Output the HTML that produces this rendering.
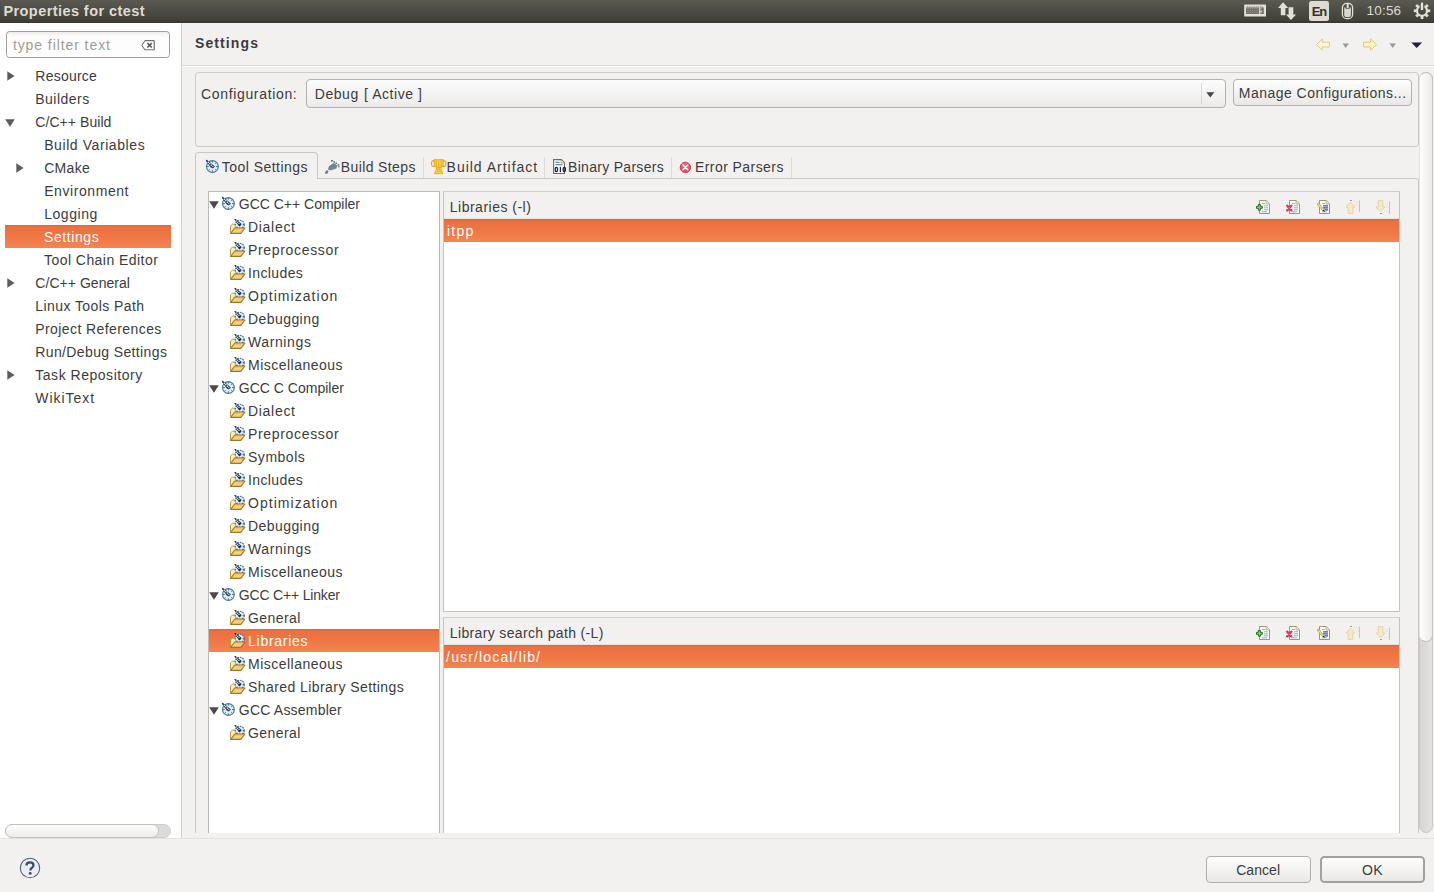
<!DOCTYPE html>
<html><head><meta charset='utf-8'><title>Properties for ctest</title><style>
*{box-sizing:border-box;margin:0;padding:0}
html,body{width:1434px;height:892px;overflow:hidden;background:#f2f1f0;font-family:"Liberation Sans",sans-serif}
#r{position:relative;width:1434px;height:892px;overflow:hidden;background:#f2f1f0}
#r div,.t,.i{position:absolute}
.t{white-space:pre;line-height:20px;height:20px}
.i{overflow:visible}
.sel{background:linear-gradient(#e1672f 0,#ec7040 9%,#ef7846 55%,#f38552 100%)}
</style></head><body><div id=r>
<svg width="0" height="0" style="position:absolute">
<defs>
<!-- tool settings gear/clock icon : 16x16 box, ring occupies ~1..14 -->
<symbol id="tool" viewBox="0 0 16 16">
  <circle cx="7.4" cy="7.5" r="5.9" fill="#e0edf8" stroke="#487b9a" stroke-width="1.2"/>
  <g stroke="#4c7d9b" stroke-width="1">
    <path d="M7.4 1.7v2M7.4 11.3v2.2M1.6 7.5h2.2M11 7.5h2.2M3.3 11.6l1.3-1.3M11.5 11.6l-1.3-1.3M11.5 3.4l-1.3 1.3"/>
  </g>
  <path d="M0.8 1 L1.8 0.7 L10 7.4 L7.8 9.6 L5.8 8.4 L1.2 2.2Z" fill="#27405a"/>
  <path d="M2.8 2.9 L8.2 7.7" stroke="#fff" stroke-width="1.2" stroke-dasharray="1.3 .8"/>
</symbol>
<!-- folder with tool overlay : 17x17 -->
<symbol id="fold" viewBox="0 0 17 17">
  <path d="M1.5 13.5 V7 L3.4 5.2 H6.6 L7.6 6.4 H12 V9" fill="#fbefb9" stroke="#b99a3f" stroke-width="1"/>
  <g transform="translate(5,0) scale(0.76)">
    <circle cx="7.6" cy="7.6" r="5.9" fill="#e4effa" stroke="#3d6fa8" stroke-width="1.5" stroke-dasharray="2.2 1.2"/>
    <path d="M3.4 11.8l1.3-1.3M11.8 11.8l-1.3-1.3M7.6 11.3v2.2M11.3 7.6h2.2" stroke="#34589a" stroke-width="1.4"/>
    <path d="M0.2 0 L1.8 -0.2 L10 6.6 L7.8 9.8 L6 8.8 Z" fill="#1d2f3b"/>
    <path d="M2.6 2.2 L7.8 7.2" stroke="#fff" stroke-width="1.7" stroke-dasharray="1.3 1.1"/>
  </g>
  <path d="M1.6 14.4 L5.8 9 H16 L11.8 14.4 Z" fill="#f8cf7a" stroke="#9d7a26" stroke-width="1.1" stroke-linejoin="round"/>
  <path d="M6.2 9.9 H14.6" stroke="#d9a060" stroke-width="0.8" opacity=".7"/>
</symbol>
<!-- build steps (spray) -->
<symbol id="steps" viewBox="0 0 16 16">
  <path d="M1 14.2 Q1 12.6 3 11 L4.6 12.4 Q3.6 15 1.8 15 Q1 15 1 14.2Z" fill="#6c7b88"/>
  <path d="M4 10.4 L5 7.2 L9.6 4 L13.2 6.6 L12.4 9.4 L7.2 11.2 L5.2 11.2Z" fill="#728595"/>
  <path d="M9.8 4.4 L13 6.8 L12.4 9 L10.6 9.2Z" fill="#6a8a82" opacity=".8"/>
  <g fill="#5b6873"><rect x="7" y="1" width="1.8" height="1.5"/><rect x="9.4" y="2.2" width="1.6" height="1.4"/><rect x="11.4" y="3.6" width="1.6" height="1.4"/><rect x="13.6" y="5.2" width="1.6" height="1.4"/><rect x="14.2" y="6.8" width="1.4" height="1.6" fill="#6b6f86"/></g>
</symbol>
<!-- trophy -->
<symbol id="trophy" viewBox="0 0 16 16">
  <ellipse cx="2.6" cy="4.6" rx="2.2" ry="3" fill="none" stroke="#dba53a" stroke-width="1.1"/>
  <ellipse cx="12.8" cy="4.6" rx="2.2" ry="3" fill="none" stroke="#dba53a" stroke-width="1.1"/>
  <path d="M3 0.7 H12.4 V5 Q12.4 8.7 7.7 8.9 Q3 8.7 3 5Z" fill="#fbc93c" stroke="#e9a11d" stroke-width=".9"/>
  <path d="M5.4 1.6V7.6M7.7 1.6V8M10 1.6V7.6" stroke="#f3a81c" stroke-width="1"/>
  <path d="M6.5 1.6V7.6M8.8 1.6V7.8" stroke="#fdeb78" stroke-width=".9"/>
  <path d="M5.8 9 H9.6 L11.8 14.7 H3.4Z" fill="#fbd648" stroke="#e9a524" stroke-width=".9" stroke-linejoin="round"/>
  <path d="M6 10.6H9.4M5.4 12.3H10" stroke="#eda826" stroke-width=".9"/>
</symbol>
<!-- binary file -->
<symbol id="bin" viewBox="0 0 16 16">
  <path d="M1.6 0.6 H9.4 L12.5 3.8 V14.5 H1.6Z" fill="#fafbfd" stroke="#6f6b5c" stroke-width="1.1"/>
  <path d="M9.2 0.8 V4 H12.4" fill="#f3e8b8" stroke="#a39a70" stroke-width=".8"/>
  <path d="M3.4 3.4H7.6M3.4 5.6H10.4" stroke="#7089b3" stroke-width="1.1"/>
  <g fill="none" stroke="#16233f" stroke-width="1.25"><rect x="3.3" y="8.4" width="2.2" height="4.2" rx="1.1"/><path d="M8.4 7.9V13.1"/><rect x="11.2" y="8.4" width="2.2" height="4.2" rx="1.1"/></g>
</symbol>
<!-- error -->
<symbol id="err" viewBox="0 0 16 16">
  <circle cx="6.4" cy="7.4" r="5.2" fill="#e84b5b" stroke="#c63244" stroke-width=".9"/>
  <circle cx="6.4" cy="6.4" r="3.8" fill="#f27f88" opacity=".45"/>
  <path d="M4 5 L8.8 9.8 M8.8 5 L4 9.8" stroke="#fff" stroke-width="1.5" stroke-linecap="round"/>
</symbol>
<!-- document base -->
<symbol id="doc" viewBox="0 0 16 16">
  <path d="M4.5 1.5 H11.2 L14.5 4.8 V14.5 H4.5Z" fill="#fcfcfa" stroke="#94896c" stroke-width=".9"/>
  <path d="M11 1.6 V5 H14.4" fill="#f1e6b8" stroke="#aea076" stroke-width=".7"/>
  <path d="M7 4.6H10M9 6.8H13M9 8.8H13M9 10.8H13M7 12.8H12" stroke="#8aa2cf" stroke-width=".9"/>
</symbol>
<symbol id="add" viewBox="0 0 16 16">
  <use href="#doc"/>
  <path d="M3.4 5.4 H5.4 V7.3 H7.3 V9.3 H5.4 V11.2 H3.4 V9.3 H1.5 V7.3 H3.4Z" fill="#86cf60" stroke="#1f6d22" stroke-width=".95" stroke-linejoin="round"/>
</symbol>
<symbol id="del" viewBox="0 0 16 16">
  <use href="#doc"/>
  <path d="M2.2 6.8 L6.4 11.4 M6.4 6.8 L2.2 11.4" stroke="#d62c3f" stroke-width="2.3" stroke-linecap="round"/>
  <path d="M2.6 7.2 L6 11 M6 7.2 L2.6 11" stroke="#f0606c" stroke-width=".9" stroke-linecap="round"/>
</symbol>
<symbol id="edit" viewBox="0 0 16 16">
  <use href="#doc"/>
  <path d="M8 6.8H13M8 8.8H13M10 10.8H13" stroke="#4a67b2" stroke-width="1.2"/>
  <path d="M2 5 L3.5 3.9 L9.1 10.5 L7.6 11.7Z" fill="#f4e284" stroke="#b09c4c" stroke-width=".8"/>
  <path d="M7.6 11.7 L9.1 10.5 L9.9 13Z" fill="#1b1b2b"/>
</symbol>
<symbol id="up" viewBox="0 0 16 16">
  <g opacity=".62">
  <path d="M5.5 3.2 L10 8 H7.8 V14.4 H3.2 V8 H1 Z" fill="#fae7a8" stroke="#dcc27c" stroke-width="1" stroke-linejoin="round"/>
  <path d="M14.5 1.5V13" stroke="#a9a9b3" stroke-width="1"/>
  <path d="M5 1.5h2" stroke="#666" stroke-width="1"/>
  <path d="M9 2.5h5M10 4.5h4M11 6.5h3M11 10.5h3" stroke="#d5d5e2" stroke-width="1" stroke-dasharray="1 1"/>
  </g>
</symbol>
<symbol id="down" viewBox="0 0 16 16">
  <g opacity=".62">
  <path d="M5.5 12.8 L10 8 H7.8 V1.6 H3.2 V8 H1 Z" fill="#fae7a8" stroke="#dcc27c" stroke-width="1" stroke-linejoin="round"/>
  <path d="M14.5 2.5V15" stroke="#a9a9b3" stroke-width="1"/>
  <path d="M5 14.5h2" stroke="#666" stroke-width="1"/>
  <path d="M10 4.5h4M10 6.5h4M11 8.5h3M9 12.5h5" stroke="#d5d5e2" stroke-width="1" stroke-dasharray="1 1"/>
  </g>
</symbol>
<!-- nav arrows (faded yellow) -->
<symbol id="back" viewBox="0 0 16 16">
  <path d="M1.4 7.6 L7.4 2 V5.2 H14.4 V10 H7.4 V13.2Z" fill="#fdf5d3" stroke="#dccb96" stroke-width="1" stroke-linejoin="round"/>
</symbol>
<symbol id="fwd" viewBox="0 0 16 16">
  <path d="M14.6 7.6 L8.6 2 V5.2 H1.6 V10 H8.6 V13.2Z" fill="#fdf2c2" stroke="#d9c68a" stroke-width="1" stroke-linejoin="round"/>
</symbol>
<!-- indicators -->
<symbol id="kbd" viewBox="0 0 23 14">
  <rect x=".2" y=".6" width="21.8" height="12" rx=".6" fill="#e4e1d9"/>
  <rect x="2" y="3.4" width="17.8" height="6.6" fill="#6f6d67"/>
  <path d="M2.6 4.6h16.6M2.6 6.6h16.6M2.6 8.6h16.6" stroke="#a9a69f" stroke-width=".9" stroke-dasharray=".9 .9"/>
  <path d="M3 2.4h16" stroke="#8d8b85" stroke-width=".8" stroke-dasharray="1.2 1"/>
  <rect x="15.2" y="3.4" width="1.2" height="6.6" fill="#e4e1d9"/>
  <rect x="16.4" y="7" width="1.4" height="1.2" fill="#e4e1d9"/>
</symbol>
<symbol id="net" viewBox="0 0 19 19">
  <path d="M5.1 0.3 L10.2 5.9 H7.4 V13.3 H2.8 V5.9 H0Z" fill="#e2dfd7"/>
  <path d="M13 18 L7.9 12.6 H10.6 V5.3 H15.3 V12.6 H18.1Z" fill="#e2dfd7"/>
</symbol>
<symbol id="bat" viewBox="0 0 15 18">
  <rect x="2.4" y="1.4" width="10.2" height="15.2" rx="4.2" fill="none" stroke="#e2dfd7" stroke-width="1.3"/>
  <path d="M4.2 5.6 H10.9 V13 Q10.9 15.2 7.5 15.2 Q4.2 15.2 4.2 13Z" fill="#dad7cf"/>
  <rect x="5.6" y="4.4" width="4" height="2.4" fill="#4a4944"/>
  <rect x="6.7" y="1.6" width="2" height="4.6" fill="#e2dfd7"/>
</symbol>
<symbol id="gear" viewBox="0 0 19 19">
  <g transform="translate(9,8.8)">
  <circle r="5" fill="none" stroke="#e2dfd7" stroke-width="2.2"/>
  <g fill="#e2dfd7">
    <rect x="-1.4" y="-8.2" width="2.8" height="3" transform="rotate(45)"/>
    <rect x="-1.4" y="-8.2" width="2.8" height="3" transform="rotate(90)"/>
    <rect x="-1.4" y="-8.2" width="2.8" height="3" transform="rotate(135)"/>
    <rect x="-1.4" y="-8.2" width="2.8" height="3" transform="rotate(180)"/>
    <rect x="-1.4" y="-8.2" width="2.8" height="3" transform="rotate(225)"/>
    <rect x="-1.4" y="-8.2" width="2.8" height="3" transform="rotate(270)"/>
    <rect x="-1.4" y="-8.2" width="2.8" height="3" transform="rotate(315)"/>
  </g>
  <rect x="-2.4" y="-8.6" width="4.8" height="5.6" fill="#4c4b46"/>
  <rect x="-1.2" y="-8.2" width="2.4" height="7.4" rx=".5" fill="#e6e3db"/>
  </g>
</symbol>
<symbol id="help" viewBox="0 0 22 22">
  <circle cx="11" cy="11" r="9.7" fill="#eaedf4" stroke="#585d6d" stroke-width="1.05"/>
  <path d="M7.4 8.6 Q7.4 5.3 11 5.3 Q14.5 5.3 14.5 8.2 Q14.5 9.8 12.7 10.9 Q11.3 11.8 11.3 13.4" fill="none" stroke="#414b5e" stroke-width="2.3"/>
  <circle cx="11.2" cy="16.4" r="1.45" fill="#414b5e"/>
</symbol>
<symbol id="clear" viewBox="0 0 17 13">
  <path d="M4.6 0.8 H16 V12.2 H4.6 L0.8 6.5Z" fill="none" stroke="#4b4a47" stroke-width="1.15" stroke-linejoin="miter"/>
  <path d="M7.6 3.8 L13 9.2 M13 3.8 L7.6 9.2" stroke="#5a5957" stroke-width="1.9"/>
</symbol>
</defs>
</svg>


<div style="left:0;top:0;width:1434px;height:23px;background:linear-gradient(#5b5a51 0%,#4f4e49 35%,#464540 70%,#403f3a 90%,#35342f 100%)"></div>
<div style="left:1309px;top:1px;width:20px;height:20px;background:#dfdbd2;border-radius:2.5px"></div>
<!-- left pane -->
<div style="left:0;top:23px;width:181px;height:815px;background:#fff"></div>
<div style="left:181px;top:23px;width:1px;height:815px;background:#d3d1ce"></div>
<div style="left:6px;top:31px;width:164px;height:27px;border:1px solid #9f9d9a;border-radius:3.5px;background:linear-gradient(#efeeed,#fdfdfd 5px)"></div>
<div class=sel style="left:5px;top:225px;width:166px;height:23px"></div>
<div style="left:5px;top:824px;width:166px;height:14px;border-radius:7px;background:#dcdbd9;border:1px solid #cfcdca"></div>
<div style="left:5px;top:824px;width:154px;height:14px;border-radius:7px;background:linear-gradient(#fdfdfd,#ececeb);border:1px solid #c4c2bf"></div>
<!-- main header -->
<div style="left:182px;top:65px;width:1252px;height:1px;background:#dedcd9"></div>
<div style="left:182px;top:66px;width:1252px;height:1px;background:#f9f9f8"></div>
<div style="left:195px;top:72px;width:1224px;height:75px;border:1px solid #cdcbc8;border-right-color:#c8c6c3;border-radius:4px"></div>
<div style="left:306px;top:79px;width:920px;height:29px;border:1px solid #b3b1ad;border-radius:4px;background:linear-gradient(#fcfcfc,#ecebea)"></div>
<div style="left:1201px;top:83px;width:1px;height:21px;background:#dad8d5"></div>
<div style="left:1233px;top:79px;width:179px;height:27px;border:1px solid #b3b1ad;border-radius:4px;background:linear-gradient(#fdfdfd,#e9e8e6)"></div>
<!-- tab folder -->
<div style="left:195px;top:178px;width:1224px;height:670px;border:1px solid #c9c7c4;border-right-color:#c8c6c3;border-radius:0 3px 0 0"></div>
<div style="left:195px;top:152px;width:123px;height:27px;border:1px solid #c9c7c4;border-bottom:none;border-radius:4px 4px 0 0;background:#f2f1f0"></div>
<div style="left:423px;top:157px;width:1px;height:21px;background:#dddbd8"></div>
<div style="left:544px;top:157px;width:1px;height:21px;background:#dddbd8"></div>
<div style="left:671px;top:157px;width:1px;height:21px;background:#dddbd8"></div>
<div style="left:791px;top:157px;width:1px;height:21px;background:#dddbd8"></div>
<!-- inner tree -->
<div style="left:208px;top:191px;width:232px;height:650px;border:1px solid #bebcb8;background:#fff"></div>
<div class=sel style="left:209px;top:629px;width:230px;height:23px"></div>
<!-- list 1 -->
<div style="left:443px;top:191px;width:957px;height:421px;border:1px solid #c6c4c0;border-top-color:#d3d1ce;background:#fff"></div>
<div style="left:444px;top:192px;width:955px;height:26px;background:#f2f1f0"></div>
<div style="left:444px;top:218px;width:955px;height:1px;background:#e6e4e1"></div>
<div class=sel style="left:444px;top:219px;width:955px;height:23px"></div>
<!-- list 2 -->
<div style="left:443px;top:617px;width:957px;height:230px;border:1px solid #c6c4c0;border-top-color:#d3d1ce;background:#fff"></div>
<div style="left:444px;top:618px;width:955px;height:26px;background:#f2f1f0"></div>
<div style="left:444px;top:644px;width:955px;height:1px;background:#e6e4e1"></div>
<div class=sel style="left:444px;top:645px;width:955px;height:23px"></div>
<!-- v scrollbar -->
<div style="left:1419px;top:72px;width:14px;height:761px;border-radius:7px;background:linear-gradient(90deg,#d6d5d3,#e4e3e1);border:1px solid #cbc9c6"></div>
<div style="left:1419px;top:72px;width:14px;height:570px;border-radius:7px;background:linear-gradient(90deg,#fefefe,#ebebea);border:1px solid #c4c2bf;border-left-color:#e3e2e0"></div>
<!-- bottom bar -->
<div style="left:0;top:838px;width:1434px;height:54px;background:#f2f1f0"></div>
<div style="left:182px;top:833px;width:1252px;height:5px;background:#f2f1f0"></div>
<div style="left:0;top:838px;width:1434px;height:1px;background:#e3e1de"></div>
<div style="left:1206px;top:856px;width:105px;height:27px;border:1px solid #b0aeaa;border-radius:4px;background:linear-gradient(#fdfdfd,#e9e8e6)"></div>
<div style="left:1320px;top:856px;width:105px;height:27px;border:2px solid #a3a19d;border-radius:4.5px;background:linear-gradient(#fdfdfd,#e9e8e6)"></div>

<svg class=i style='left:6.5px;top:70.6px' width=8 height=10><path d='M0.3 0.3 L7.6 5 L0.3 9.7Z' fill='#5c5c5c'/></svg>
<svg class=i style='left:5px;top:118.6px' width=10 height=8><path d='M0.2 0.3 L9.8 0.3 L5 7.8Z' fill='#5c5c5c'/></svg>
<svg class=i style='left:16px;top:162.6px' width=8 height=10><path d='M0.3 0.3 L7.6 5 L0.3 9.7Z' fill='#5c5c5c'/></svg>
<svg class=i style='left:6.5px;top:277.6px' width=8 height=10><path d='M0.3 0.3 L7.6 5 L0.3 9.7Z' fill='#5c5c5c'/></svg>
<svg class=i style='left:6.5px;top:369.6px' width=8 height=10><path d='M0.3 0.3 L7.6 5 L0.3 9.7Z' fill='#5c5c5c'/></svg>
<svg class=i style='left:209px;top:200.8px' width=10 height=8><path d='M0.2 0.3 L9.8 0.3 L5 7.8Z' fill='#4a4a4a'/></svg>
<svg class=i style='left:221px;top:196px' width=16 height=16 ><use href='#tool'/></svg>
<svg class=i style='left:229px;top:218.5px' width=17 height=17 ><use href='#fold'/></svg>
<svg class=i style='left:229px;top:241.5px' width=17 height=17 ><use href='#fold'/></svg>
<svg class=i style='left:229px;top:264.5px' width=17 height=17 ><use href='#fold'/></svg>
<svg class=i style='left:229px;top:287.5px' width=17 height=17 ><use href='#fold'/></svg>
<svg class=i style='left:229px;top:310.5px' width=17 height=17 ><use href='#fold'/></svg>
<svg class=i style='left:229px;top:333.5px' width=17 height=17 ><use href='#fold'/></svg>
<svg class=i style='left:229px;top:356.5px' width=17 height=17 ><use href='#fold'/></svg>
<svg class=i style='left:209px;top:384.8px' width=10 height=8><path d='M0.2 0.3 L9.8 0.3 L5 7.8Z' fill='#4a4a4a'/></svg>
<svg class=i style='left:221px;top:380px' width=16 height=16 ><use href='#tool'/></svg>
<svg class=i style='left:229px;top:402.5px' width=17 height=17 ><use href='#fold'/></svg>
<svg class=i style='left:229px;top:425.5px' width=17 height=17 ><use href='#fold'/></svg>
<svg class=i style='left:229px;top:448.5px' width=17 height=17 ><use href='#fold'/></svg>
<svg class=i style='left:229px;top:471.5px' width=17 height=17 ><use href='#fold'/></svg>
<svg class=i style='left:229px;top:494.5px' width=17 height=17 ><use href='#fold'/></svg>
<svg class=i style='left:229px;top:517.5px' width=17 height=17 ><use href='#fold'/></svg>
<svg class=i style='left:229px;top:540.5px' width=17 height=17 ><use href='#fold'/></svg>
<svg class=i style='left:229px;top:563.5px' width=17 height=17 ><use href='#fold'/></svg>
<svg class=i style='left:209px;top:591.8px' width=10 height=8><path d='M0.2 0.3 L9.8 0.3 L5 7.8Z' fill='#4a4a4a'/></svg>
<svg class=i style='left:221px;top:587px' width=16 height=16 ><use href='#tool'/></svg>
<svg class=i style='left:229px;top:609.5px' width=17 height=17 ><use href='#fold'/></svg>
<svg class=i style='left:229px;top:632.5px' width=17 height=17 ><use href='#fold'/></svg>
<svg class=i style='left:229px;top:655.5px' width=17 height=17 ><use href='#fold'/></svg>
<svg class=i style='left:229px;top:678.5px' width=17 height=17 ><use href='#fold'/></svg>
<svg class=i style='left:209px;top:706.8px' width=10 height=8><path d='M0.2 0.3 L9.8 0.3 L5 7.8Z' fill='#4a4a4a'/></svg>
<svg class=i style='left:221px;top:702px' width=16 height=16 ><use href='#tool'/></svg>
<svg class=i style='left:229px;top:724.5px' width=17 height=17 ><use href='#fold'/></svg>
<svg class=i style='left:205px;top:159px' width=16 height=16 ><use href='#tool'/></svg>
<svg class=i style='left:324px;top:159px' width=16 height=16 ><use href='#steps'/></svg>
<svg class=i style='left:431px;top:159px' width=16 height=16 ><use href='#trophy'/></svg>
<svg class=i style='left:552px;top:159px' width=16 height=16 ><use href='#bin'/></svg>
<svg class=i style='left:679px;top:160px' width=16 height=16 ><use href='#err'/></svg>
<svg class=i style='left:1255px;top:199px' width=16 height=16 ><use href='#add'/></svg>
<svg class=i style='left:1285px;top:199px' width=16 height=16 ><use href='#del'/></svg>
<svg class=i style='left:1315px;top:199px' width=16 height=16 ><use href='#edit'/></svg>
<svg class=i style='left:1345px;top:199px' width=16 height=16 ><use href='#up'/></svg>
<svg class=i style='left:1375px;top:199px' width=16 height=16 ><use href='#down'/></svg>
<svg class=i style='left:1255px;top:625px' width=16 height=16 ><use href='#add'/></svg>
<svg class=i style='left:1285px;top:625px' width=16 height=16 ><use href='#del'/></svg>
<svg class=i style='left:1315px;top:625px' width=16 height=16 ><use href='#edit'/></svg>
<svg class=i style='left:1345px;top:625px' width=16 height=16 ><use href='#up'/></svg>
<svg class=i style='left:1375px;top:625px' width=16 height=16 ><use href='#down'/></svg>
<svg class=i style='left:1315px;top:37px' width=16 height=16 ><use href='#back'/></svg>
<svg class=i style='left:1362px;top:37px' width=16 height=16 ><use href='#fwd'/></svg>
<svg class=i style='left:1341.5px;top:42.6px' width=8 height=6><path d='M0.5 0.5h6.4L3.7 5z' fill='#9a9a9a'/></svg>
<svg class=i style='left:1388.5px;top:42.6px' width=8 height=6><path d='M0.5 0.5h6.4L3.7 5z' fill='#9a9a9a'/></svg>
<svg class=i style='left:1411.4px;top:42.4px' width=12 height=7><path d='M0.3 0.4h10.8L5.7 6z' fill='#211f3d'/></svg>
<svg class=i style='left:1244px;top:4px' width=23 height=14 ><use href='#kbd'/></svg>
<svg class=i style='left:1278px;top:2px' width=19 height=19 ><use href='#net'/></svg>
<svg class=i style='left:1340px;top:2px' width=15 height=18 ><use href='#bat'/></svg>
<svg class=i style='left:1413px;top:2px' width=19 height=19 ><use href='#gear'/></svg>
<svg class=i style='left:19px;top:857px' width=22 height=22 ><use href='#help'/></svg>
<svg class=i style='left:141px;top:39.6px' width=14.2 height=10.6 ><use href='#clear'/></svg>
<svg class=i style='left:1206px;top:92px' width=9 height=6><path d='M0.3 0.2h8L4.3 5.5z' fill='#454545'/></svg>
<span class=t style='left:3.4px;top:1.1px;font-size:14.5px;letter-spacing:0.43px;color:#dfdbd2;font-weight:700'>Properties for ctest</span>
<span class=t style='left:1366.6px;top:0.9px;font-size:13.5px;letter-spacing:0.18px;color:#dfdbd2'>10:56</span>
<span class=t style='left:1311.8px;top:1.7px;font-size:13px;letter-spacing:-1.20px;color:#33322e;font-weight:700'>En</span>
<span class=t style='left:35.3px;top:65.7px;font-size:14px;letter-spacing:0.23px;color:#3c3c3c'>Resource</span>
<span class=t style='left:35.3px;top:88.7px;font-size:14px;letter-spacing:0.47px;color:#3c3c3c'>Builders</span>
<span class=t style='left:35.3px;top:111.7px;font-size:14px;letter-spacing:0.06px;color:#3c3c3c'>C/C++ Build</span>
<span class=t style='left:44.2px;top:134.7px;font-size:14px;letter-spacing:0.58px;color:#3c3c3c'>Build Variables</span>
<span class=t style='left:44.2px;top:157.7px;font-size:14px;letter-spacing:0.31px;color:#3c3c3c'>CMake</span>
<span class=t style='left:44.2px;top:180.7px;font-size:14px;letter-spacing:0.57px;color:#3c3c3c'>Environment</span>
<span class=t style='left:44.2px;top:203.7px;font-size:14px;letter-spacing:0.55px;color:#3c3c3c'>Logging</span>
<span class=t style='left:44.0px;top:226.7px;font-size:14px;letter-spacing:0.59px;color:#ffffff'>Settings</span>
<span class=t style='left:44.0px;top:249.7px;font-size:14px;letter-spacing:0.45px;color:#3c3c3c'>Tool Chain Editor</span>
<span class=t style='left:35.3px;top:272.7px;font-size:14px;letter-spacing:0.04px;color:#3c3c3c'>C/C++ General</span>
<span class=t style='left:35.3px;top:295.7px;font-size:14px;letter-spacing:0.42px;color:#3c3c3c'>Linux Tools Path</span>
<span class=t style='left:35.3px;top:318.7px;font-size:14px;letter-spacing:0.41px;color:#3c3c3c'>Project References</span>
<span class=t style='left:35.3px;top:341.7px;font-size:14px;letter-spacing:0.37px;color:#3c3c3c'>Run/Debug Settings</span>
<span class=t style='left:35.3px;top:364.7px;font-size:14px;letter-spacing:0.52px;color:#3c3c3c'>Task Repository</span>
<span class=t style='left:35.3px;top:387.7px;font-size:14px;letter-spacing:0.97px;color:#3c3c3c'>WikiText</span>
<span class=t style='left:12.9px;top:34.7px;font-size:14px;letter-spacing:0.92px;color:#9d9c9a'>type filter text</span>
<span class=t style='left:195.0px;top:33.0px;font-size:14px;letter-spacing:1.10px;color:#3c3c3c;font-weight:700'>Settings</span>
<span class=t style='left:201.0px;top:83.7px;font-size:14px;letter-spacing:0.66px;color:#3c3c3c'>Configuration:</span>
<span class=t style='left:314.8px;top:83.7px;font-size:14px;letter-spacing:0.53px;color:#3c3c3c'>Debug</span>
<span class=t style='left:364.0px;top:83.7px;font-size:14px;letter-spacing:0.56px;color:#3c3c3c'>[ Active ]</span>
<span class=t style='left:1238.8px;top:82.9px;font-size:14px;letter-spacing:0.47px;color:#3c3c3c'>Manage Configurations...</span>
<span class=t style='left:221.7px;top:156.5px;font-size:14px;letter-spacing:0.48px;color:#3c3c3c'>Tool Settings</span>
<span class=t style='left:340.8px;top:156.9px;font-size:14px;letter-spacing:0.38px;color:#3c3c3c'>Build Steps</span>
<span class=t style='left:446.6px;top:156.9px;font-size:14px;letter-spacing:0.98px;color:#3c3c3c'>Build Artifact</span>
<span class=t style='left:568.0px;top:156.9px;font-size:14px;letter-spacing:0.30px;color:#3c3c3c'>Binary Parsers</span>
<span class=t style='left:695.0px;top:156.9px;font-size:14px;letter-spacing:0.43px;color:#3c3c3c'>Error Parsers</span>
<span class=t style='left:238.8px;top:193.9px;font-size:14px;letter-spacing:-0.01px;color:#3c3c3c'>GCC C++ Compiler</span>
<span class=t style='left:248.0px;top:216.9px;font-size:14px;letter-spacing:0.70px;color:#3c3c3c'>Dialect</span>
<span class=t style='left:248.0px;top:239.9px;font-size:14px;letter-spacing:0.67px;color:#3c3c3c'>Preprocessor</span>
<span class=t style='left:248.0px;top:262.9px;font-size:14px;letter-spacing:0.38px;color:#3c3c3c'>Includes</span>
<span class=t style='left:248.0px;top:285.9px;font-size:14px;letter-spacing:1.04px;color:#3c3c3c'>Optimization</span>
<span class=t style='left:248.0px;top:308.9px;font-size:14px;letter-spacing:0.43px;color:#3c3c3c'>Debugging</span>
<span class=t style='left:248.0px;top:331.9px;font-size:14px;letter-spacing:0.61px;color:#3c3c3c'>Warnings</span>
<span class=t style='left:248.0px;top:354.9px;font-size:14px;letter-spacing:0.49px;color:#3c3c3c'>Miscellaneous</span>
<span class=t style='left:238.8px;top:377.9px;font-size:14px;letter-spacing:0.01px;color:#3c3c3c'>GCC C Compiler</span>
<span class=t style='left:248.0px;top:400.9px;font-size:14px;letter-spacing:0.70px;color:#3c3c3c'>Dialect</span>
<span class=t style='left:248.0px;top:423.9px;font-size:14px;letter-spacing:0.67px;color:#3c3c3c'>Preprocessor</span>
<span class=t style='left:248.0px;top:446.9px;font-size:14px;letter-spacing:0.52px;color:#3c3c3c'>Symbols</span>
<span class=t style='left:248.0px;top:469.9px;font-size:14px;letter-spacing:0.38px;color:#3c3c3c'>Includes</span>
<span class=t style='left:248.0px;top:492.9px;font-size:14px;letter-spacing:1.04px;color:#3c3c3c'>Optimization</span>
<span class=t style='left:248.0px;top:515.9px;font-size:14px;letter-spacing:0.43px;color:#3c3c3c'>Debugging</span>
<span class=t style='left:248.0px;top:538.9px;font-size:14px;letter-spacing:0.61px;color:#3c3c3c'>Warnings</span>
<span class=t style='left:248.0px;top:561.9px;font-size:14px;letter-spacing:0.49px;color:#3c3c3c'>Miscellaneous</span>
<span class=t style='left:238.8px;top:584.9px;font-size:14px;letter-spacing:-0.18px;color:#3c3c3c'>GCC C++ Linker</span>
<span class=t style='left:248.0px;top:607.9px;font-size:14px;letter-spacing:0.43px;color:#3c3c3c'>General</span>
<span class=t style='left:248.0px;top:630.9px;font-size:14px;letter-spacing:0.74px;color:#ffffff'>Libraries</span>
<span class=t style='left:248.0px;top:653.9px;font-size:14px;letter-spacing:0.49px;color:#3c3c3c'>Miscellaneous</span>
<span class=t style='left:248.0px;top:676.9px;font-size:14px;letter-spacing:0.43px;color:#3c3c3c'>Shared Library Settings</span>
<span class=t style='left:238.8px;top:699.9px;font-size:14px;letter-spacing:0.21px;color:#3c3c3c'>GCC Assembler</span>
<span class=t style='left:248.0px;top:722.9px;font-size:14px;letter-spacing:0.43px;color:#3c3c3c'>General</span>
<span class=t style='left:449.8px;top:196.5px;font-size:14px;letter-spacing:0.49px;color:#3c3c3c'>Libraries (-l)</span>
<span class=t style='left:447.0px;top:220.9px;font-size:14px;letter-spacing:1.20px;color:#ffffff'>itpp</span>
<span class=t style='left:449.8px;top:622.8px;font-size:14px;letter-spacing:0.35px;color:#3c3c3c'>Library search path (-L)</span>
<span class=t style='left:446.1px;top:646.9px;font-size:14px;letter-spacing:1.15px;color:#ffffff'>/usr/local/lib/</span>
<span class=t style='left:1236.2px;top:859.8px;font-size:14px;letter-spacing:0.06px;color:#3c3c3c'>Cancel</span>
<span class=t style='left:1362.1px;top:859.8px;font-size:14px;letter-spacing:0.37px;color:#3c3c3c'>OK</span>
</div></body></html>
